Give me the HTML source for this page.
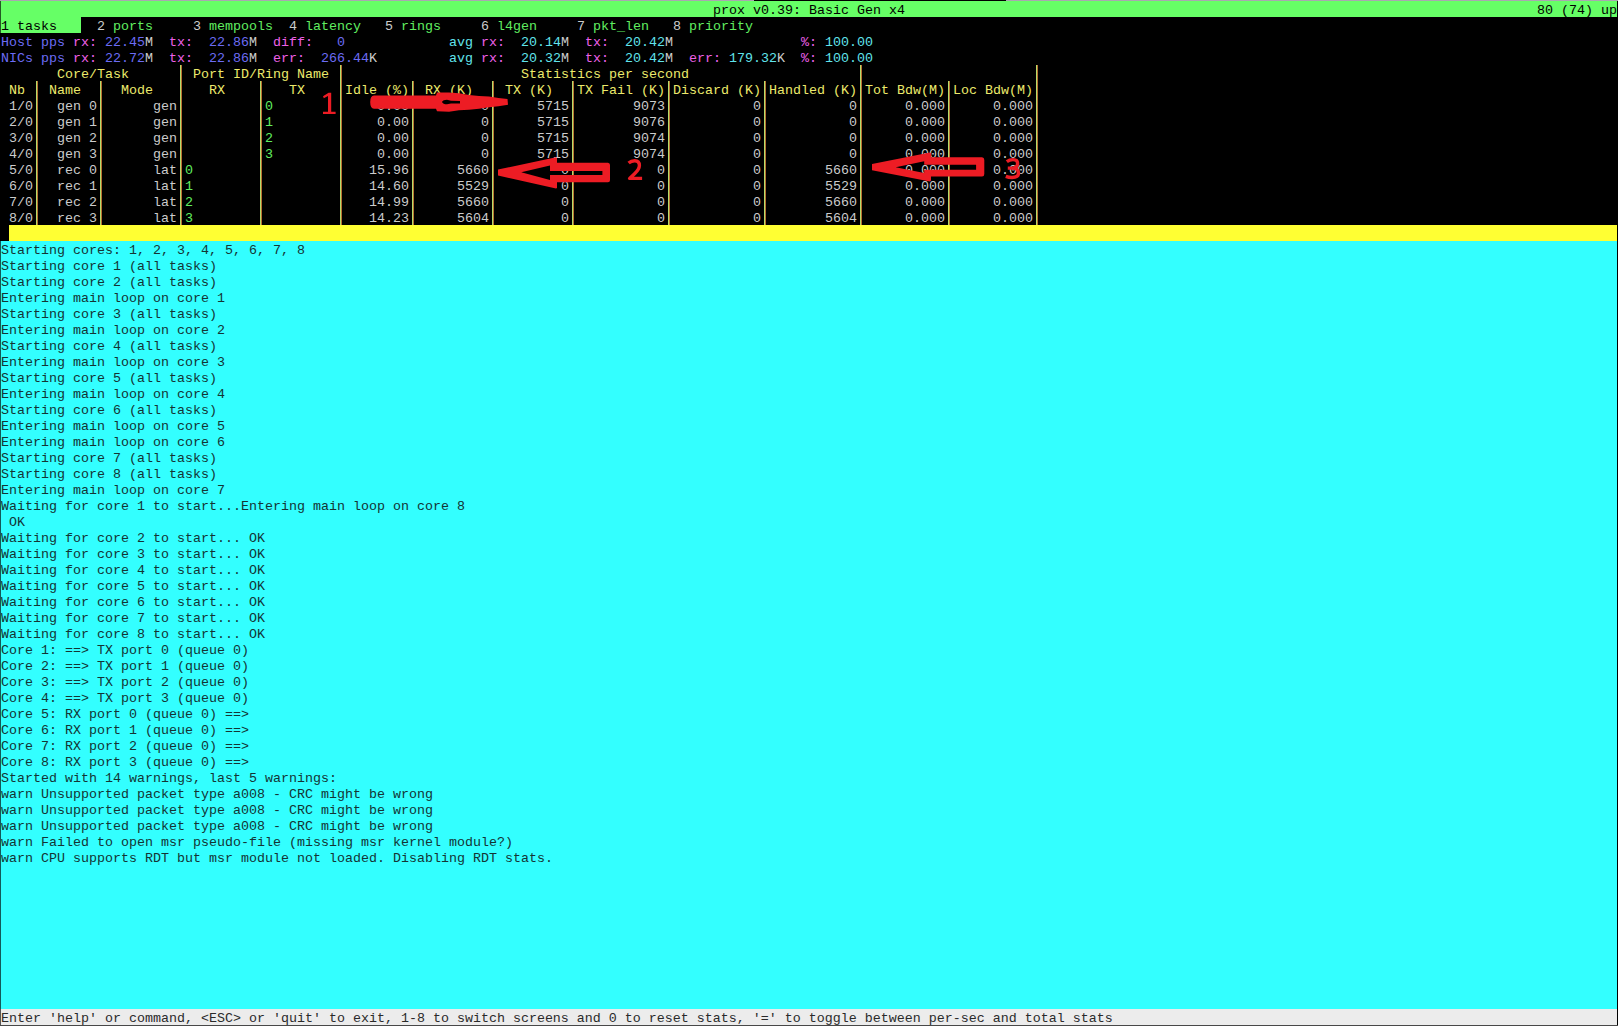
<!DOCTYPE html><html><head><meta charset="utf-8"><style>
html,body{margin:0;padding:0;}
body{width:1618px;height:1026px;position:relative;overflow:hidden;background:#000;font-family:"Liberation Mono",monospace;font-size:13.33px;line-height:16px;}
.b{position:absolute;}
.t{position:absolute;white-space:pre;height:16px;}
.v{position:absolute;width:1px;}
</style></head><body>
<div style="position:absolute;left:0;top:0;width:1618px;height:1026px">
<div class="b" style="left:1px;top:1px;width:1616px;height:16px;background:#66ff66"></div>
<div class="b" style="left:1px;top:17px;width:80px;height:16px;background:#66ff66"></div>
<div class="b" style="left:9px;top:225px;width:1608px;height:16px;background:#ffff33"></div>
<div class="b" style="left:1px;top:241px;width:1616px;height:768px;background:#33ffff"></div>
<div class="b" style="left:1px;top:1009px;width:1616px;height:16px;background:#ececec"></div>
<div class="v" style="left:180px;top:65px;height:160px;background:#b4dc6c"></div>
<div class="v" style="left:181px;top:65px;height:160px;background:#b87030"></div>
<div class="v" style="left:340px;top:65px;height:160px;background:#b4dc6c"></div>
<div class="v" style="left:341px;top:65px;height:160px;background:#b87030"></div>
<div class="v" style="left:860px;top:65px;height:160px;background:#b4dc6c"></div>
<div class="v" style="left:861px;top:65px;height:160px;background:#b87030"></div>
<div class="v" style="left:1036px;top:65px;height:160px;background:#b4dc6c"></div>
<div class="v" style="left:1037px;top:65px;height:160px;background:#b87030"></div>
<div class="v" style="left:36px;top:81px;height:144px;background:#b4dc6c"></div>
<div class="v" style="left:37px;top:81px;height:144px;background:#b87030"></div>
<div class="v" style="left:100px;top:81px;height:144px;background:#b4dc6c"></div>
<div class="v" style="left:101px;top:81px;height:144px;background:#b87030"></div>
<div class="v" style="left:260px;top:81px;height:144px;background:#b4dc6c"></div>
<div class="v" style="left:261px;top:81px;height:144px;background:#b87030"></div>
<div class="v" style="left:412px;top:81px;height:144px;background:#b4dc6c"></div>
<div class="v" style="left:413px;top:81px;height:144px;background:#b87030"></div>
<div class="v" style="left:492px;top:81px;height:144px;background:#b4dc6c"></div>
<div class="v" style="left:493px;top:81px;height:144px;background:#b87030"></div>
<div class="v" style="left:572px;top:81px;height:144px;background:#b4dc6c"></div>
<div class="v" style="left:573px;top:81px;height:144px;background:#b87030"></div>
<div class="v" style="left:668px;top:81px;height:144px;background:#b4dc6c"></div>
<div class="v" style="left:669px;top:81px;height:144px;background:#b87030"></div>
<div class="v" style="left:764px;top:81px;height:144px;background:#b4dc6c"></div>
<div class="v" style="left:765px;top:81px;height:144px;background:#b87030"></div>
<div class="v" style="left:948px;top:81px;height:144px;background:#b4dc6c"></div>
<div class="v" style="left:949px;top:81px;height:144px;background:#b87030"></div>
<div class="t" style="left:713px;top:3px;color:#000">prox v0.39: Basic Gen x4</div>
<div class="t" style="left:1537px;top:3px;color:#000">80 (74) up</div>
<div class="t" style="left:1px;top:19px;color:#000">1 tasks</div>
<div class="t" style="left:97px;top:19px;color:#cccccc">2</div>
<div class="t" style="left:113px;top:19px;color:#60ee60">ports</div>
<div class="t" style="left:193px;top:19px;color:#cccccc">3</div>
<div class="t" style="left:209px;top:19px;color:#60ee60">mempools</div>
<div class="t" style="left:289px;top:19px;color:#cccccc">4</div>
<div class="t" style="left:305px;top:19px;color:#60ee60">latency</div>
<div class="t" style="left:385px;top:19px;color:#cccccc">5</div>
<div class="t" style="left:401px;top:19px;color:#60ee60">rings</div>
<div class="t" style="left:481px;top:19px;color:#cccccc">6</div>
<div class="t" style="left:497px;top:19px;color:#60ee60">l4gen</div>
<div class="t" style="left:577px;top:19px;color:#cccccc">7</div>
<div class="t" style="left:593px;top:19px;color:#60ee60">pkt_len</div>
<div class="t" style="left:673px;top:19px;color:#cccccc">8</div>
<div class="t" style="left:689px;top:19px;color:#60ee60">priority</div>
<div class="t" style="left:1px;top:35px;color:#6c6cf4">Host pps</div>
<div class="t" style="left:73px;top:35px;color:#ee60e8">rx:</div>
<div class="t" style="left:105px;top:35px;color:#6c6cf4">22.45</div>
<div class="t" style="left:145px;top:35px;color:#cccccc">M</div>
<div class="t" style="left:169px;top:35px;color:#ee60e8">tx:</div>
<div class="t" style="left:209px;top:35px;color:#6c6cf4">22.86</div>
<div class="t" style="left:249px;top:35px;color:#cccccc">M</div>
<div class="t" style="left:273px;top:35px;color:#ee60e8">diff:</div>
<div class="t" style="left:337px;top:35px;color:#6c6cf4">0</div>
<div class="t" style="left:449px;top:35px;color:#60e4ec">avg</div>
<div class="t" style="left:481px;top:35px;color:#ee60e8">rx:</div>
<div class="t" style="left:521px;top:35px;color:#60e4ec">20.14</div>
<div class="t" style="left:561px;top:35px;color:#cccccc">M</div>
<div class="t" style="left:585px;top:35px;color:#ee60e8">tx:</div>
<div class="t" style="left:625px;top:35px;color:#60e4ec">20.42</div>
<div class="t" style="left:665px;top:35px;color:#cccccc">M</div>
<div class="t" style="left:801px;top:35px;color:#ee60e8">%:</div>
<div class="t" style="left:825px;top:35px;color:#60e4ec">100.00</div>
<div class="t" style="left:1px;top:51px;color:#6c6cf4">NICs pps</div>
<div class="t" style="left:73px;top:51px;color:#ee60e8">rx:</div>
<div class="t" style="left:105px;top:51px;color:#6c6cf4">22.72</div>
<div class="t" style="left:145px;top:51px;color:#cccccc">M</div>
<div class="t" style="left:169px;top:51px;color:#ee60e8">tx:</div>
<div class="t" style="left:209px;top:51px;color:#6c6cf4">22.86</div>
<div class="t" style="left:249px;top:51px;color:#cccccc">M</div>
<div class="t" style="left:273px;top:51px;color:#ee60e8">err:</div>
<div class="t" style="left:321px;top:51px;color:#6c6cf4">266.44</div>
<div class="t" style="left:369px;top:51px;color:#cccccc">K</div>
<div class="t" style="left:449px;top:51px;color:#60e4ec">avg</div>
<div class="t" style="left:481px;top:51px;color:#ee60e8">rx:</div>
<div class="t" style="left:521px;top:51px;color:#60e4ec">20.32</div>
<div class="t" style="left:561px;top:51px;color:#cccccc">M</div>
<div class="t" style="left:585px;top:51px;color:#ee60e8">tx:</div>
<div class="t" style="left:625px;top:51px;color:#60e4ec">20.42</div>
<div class="t" style="left:665px;top:51px;color:#cccccc">M</div>
<div class="t" style="left:689px;top:51px;color:#ee60e8">err:</div>
<div class="t" style="left:729px;top:51px;color:#60e4ec">179.32</div>
<div class="t" style="left:777px;top:51px;color:#cccccc">K</div>
<div class="t" style="left:801px;top:51px;color:#ee60e8">%:</div>
<div class="t" style="left:825px;top:51px;color:#60e4ec">100.00</div>
<div class="t" style="left:57px;top:67px;color:#ecea6c">Core/Task</div>
<div class="t" style="left:193px;top:67px;color:#ecea6c">Port ID/Ring Name</div>
<div class="t" style="left:521px;top:67px;color:#ecea6c">Statistics per second</div>
<div class="t" style="left:9px;top:83px;color:#ecea6c">Nb</div>
<div class="t" style="left:49px;top:83px;color:#ecea6c">Name</div>
<div class="t" style="left:121px;top:83px;color:#ecea6c">Mode</div>
<div class="t" style="left:209px;top:83px;color:#ecea6c">RX</div>
<div class="t" style="left:289px;top:83px;color:#ecea6c">TX</div>
<div class="t" style="left:345px;top:83px;color:#ecea6c">Idle (%)</div>
<div class="t" style="left:425px;top:83px;color:#ecea6c">RX (K)</div>
<div class="t" style="left:505px;top:83px;color:#ecea6c">TX (K)</div>
<div class="t" style="left:577px;top:83px;color:#ecea6c">TX Fail (K)</div>
<div class="t" style="left:673px;top:83px;color:#ecea6c">Discard (K)</div>
<div class="t" style="left:769px;top:83px;color:#ecea6c">Handled (K)</div>
<div class="t" style="left:865px;top:83px;color:#ecea6c">Tot Bdw(M)</div>
<div class="t" style="left:953px;top:83px;color:#ecea6c">Loc Bdw(M)</div>
<div class="t" style="left:9px;top:99px;color:#cccccc">1/0</div>
<div class="t" style="left:57px;top:99px;color:#cccccc">gen 0</div>
<div class="t" style="left:153px;top:99px;color:#cccccc">gen</div>
<div class="t" style="left:265px;top:99px;color:#60ee60">0</div>
<div class="t" style="left:377px;top:99px;color:#cccccc">0.00</div>
<div class="t" style="left:481px;top:99px;color:#cccccc">0</div>
<div class="t" style="left:537px;top:99px;color:#cccccc">5715</div>
<div class="t" style="left:633px;top:99px;color:#cccccc">9073</div>
<div class="t" style="left:753px;top:99px;color:#cccccc">0</div>
<div class="t" style="left:849px;top:99px;color:#cccccc">0</div>
<div class="t" style="left:905px;top:99px;color:#cccccc">0.000</div>
<div class="t" style="left:993px;top:99px;color:#cccccc">0.000</div>
<div class="t" style="left:9px;top:115px;color:#cccccc">2/0</div>
<div class="t" style="left:57px;top:115px;color:#cccccc">gen 1</div>
<div class="t" style="left:153px;top:115px;color:#cccccc">gen</div>
<div class="t" style="left:265px;top:115px;color:#60ee60">1</div>
<div class="t" style="left:377px;top:115px;color:#cccccc">0.00</div>
<div class="t" style="left:481px;top:115px;color:#cccccc">0</div>
<div class="t" style="left:537px;top:115px;color:#cccccc">5715</div>
<div class="t" style="left:633px;top:115px;color:#cccccc">9076</div>
<div class="t" style="left:753px;top:115px;color:#cccccc">0</div>
<div class="t" style="left:849px;top:115px;color:#cccccc">0</div>
<div class="t" style="left:905px;top:115px;color:#cccccc">0.000</div>
<div class="t" style="left:993px;top:115px;color:#cccccc">0.000</div>
<div class="t" style="left:9px;top:131px;color:#cccccc">3/0</div>
<div class="t" style="left:57px;top:131px;color:#cccccc">gen 2</div>
<div class="t" style="left:153px;top:131px;color:#cccccc">gen</div>
<div class="t" style="left:265px;top:131px;color:#60ee60">2</div>
<div class="t" style="left:377px;top:131px;color:#cccccc">0.00</div>
<div class="t" style="left:481px;top:131px;color:#cccccc">0</div>
<div class="t" style="left:537px;top:131px;color:#cccccc">5715</div>
<div class="t" style="left:633px;top:131px;color:#cccccc">9074</div>
<div class="t" style="left:753px;top:131px;color:#cccccc">0</div>
<div class="t" style="left:849px;top:131px;color:#cccccc">0</div>
<div class="t" style="left:905px;top:131px;color:#cccccc">0.000</div>
<div class="t" style="left:993px;top:131px;color:#cccccc">0.000</div>
<div class="t" style="left:9px;top:147px;color:#cccccc">4/0</div>
<div class="t" style="left:57px;top:147px;color:#cccccc">gen 3</div>
<div class="t" style="left:153px;top:147px;color:#cccccc">gen</div>
<div class="t" style="left:265px;top:147px;color:#60ee60">3</div>
<div class="t" style="left:377px;top:147px;color:#cccccc">0.00</div>
<div class="t" style="left:481px;top:147px;color:#cccccc">0</div>
<div class="t" style="left:537px;top:147px;color:#cccccc">5715</div>
<div class="t" style="left:633px;top:147px;color:#cccccc">9074</div>
<div class="t" style="left:753px;top:147px;color:#cccccc">0</div>
<div class="t" style="left:849px;top:147px;color:#cccccc">0</div>
<div class="t" style="left:905px;top:147px;color:#cccccc">0.000</div>
<div class="t" style="left:993px;top:147px;color:#cccccc">0.000</div>
<div class="t" style="left:9px;top:163px;color:#cccccc">5/0</div>
<div class="t" style="left:57px;top:163px;color:#cccccc">rec 0</div>
<div class="t" style="left:153px;top:163px;color:#cccccc">lat</div>
<div class="t" style="left:185px;top:163px;color:#60ee60">0</div>
<div class="t" style="left:369px;top:163px;color:#cccccc">15.96</div>
<div class="t" style="left:457px;top:163px;color:#cccccc">5660</div>
<div class="t" style="left:561px;top:163px;color:#cccccc">0</div>
<div class="t" style="left:657px;top:163px;color:#cccccc">0</div>
<div class="t" style="left:753px;top:163px;color:#cccccc">0</div>
<div class="t" style="left:825px;top:163px;color:#cccccc">5660</div>
<div class="t" style="left:905px;top:163px;color:#cccccc">0.000</div>
<div class="t" style="left:993px;top:163px;color:#cccccc">0.000</div>
<div class="t" style="left:9px;top:179px;color:#cccccc">6/0</div>
<div class="t" style="left:57px;top:179px;color:#cccccc">rec 1</div>
<div class="t" style="left:153px;top:179px;color:#cccccc">lat</div>
<div class="t" style="left:185px;top:179px;color:#60ee60">1</div>
<div class="t" style="left:369px;top:179px;color:#cccccc">14.60</div>
<div class="t" style="left:457px;top:179px;color:#cccccc">5529</div>
<div class="t" style="left:561px;top:179px;color:#cccccc">0</div>
<div class="t" style="left:657px;top:179px;color:#cccccc">0</div>
<div class="t" style="left:753px;top:179px;color:#cccccc">0</div>
<div class="t" style="left:825px;top:179px;color:#cccccc">5529</div>
<div class="t" style="left:905px;top:179px;color:#cccccc">0.000</div>
<div class="t" style="left:993px;top:179px;color:#cccccc">0.000</div>
<div class="t" style="left:9px;top:195px;color:#cccccc">7/0</div>
<div class="t" style="left:57px;top:195px;color:#cccccc">rec 2</div>
<div class="t" style="left:153px;top:195px;color:#cccccc">lat</div>
<div class="t" style="left:185px;top:195px;color:#60ee60">2</div>
<div class="t" style="left:369px;top:195px;color:#cccccc">14.99</div>
<div class="t" style="left:457px;top:195px;color:#cccccc">5660</div>
<div class="t" style="left:561px;top:195px;color:#cccccc">0</div>
<div class="t" style="left:657px;top:195px;color:#cccccc">0</div>
<div class="t" style="left:753px;top:195px;color:#cccccc">0</div>
<div class="t" style="left:825px;top:195px;color:#cccccc">5660</div>
<div class="t" style="left:905px;top:195px;color:#cccccc">0.000</div>
<div class="t" style="left:993px;top:195px;color:#cccccc">0.000</div>
<div class="t" style="left:9px;top:211px;color:#cccccc">8/0</div>
<div class="t" style="left:57px;top:211px;color:#cccccc">rec 3</div>
<div class="t" style="left:153px;top:211px;color:#cccccc">lat</div>
<div class="t" style="left:185px;top:211px;color:#60ee60">3</div>
<div class="t" style="left:369px;top:211px;color:#cccccc">14.23</div>
<div class="t" style="left:457px;top:211px;color:#cccccc">5604</div>
<div class="t" style="left:561px;top:211px;color:#cccccc">0</div>
<div class="t" style="left:657px;top:211px;color:#cccccc">0</div>
<div class="t" style="left:753px;top:211px;color:#cccccc">0</div>
<div class="t" style="left:825px;top:211px;color:#cccccc">5604</div>
<div class="t" style="left:905px;top:211px;color:#cccccc">0.000</div>
<div class="t" style="left:993px;top:211px;color:#cccccc">0.000</div>
<div class="t" style="left:1px;top:243px;color:#143434">Starting cores: 1, 2, 3, 4, 5, 6, 7, 8</div>
<div class="t" style="left:1px;top:259px;color:#143434">Starting core 1 (all tasks)</div>
<div class="t" style="left:1px;top:275px;color:#143434">Starting core 2 (all tasks)</div>
<div class="t" style="left:1px;top:291px;color:#143434">Entering main loop on core 1</div>
<div class="t" style="left:1px;top:307px;color:#143434">Starting core 3 (all tasks)</div>
<div class="t" style="left:1px;top:323px;color:#143434">Entering main loop on core 2</div>
<div class="t" style="left:1px;top:339px;color:#143434">Starting core 4 (all tasks)</div>
<div class="t" style="left:1px;top:355px;color:#143434">Entering main loop on core 3</div>
<div class="t" style="left:1px;top:371px;color:#143434">Starting core 5 (all tasks)</div>
<div class="t" style="left:1px;top:387px;color:#143434">Entering main loop on core 4</div>
<div class="t" style="left:1px;top:403px;color:#143434">Starting core 6 (all tasks)</div>
<div class="t" style="left:1px;top:419px;color:#143434">Entering main loop on core 5</div>
<div class="t" style="left:1px;top:435px;color:#143434">Entering main loop on core 6</div>
<div class="t" style="left:1px;top:451px;color:#143434">Starting core 7 (all tasks)</div>
<div class="t" style="left:1px;top:467px;color:#143434">Starting core 8 (all tasks)</div>
<div class="t" style="left:1px;top:483px;color:#143434">Entering main loop on core 7</div>
<div class="t" style="left:1px;top:499px;color:#143434">Waiting for core 1 to start...Entering main loop on core 8</div>
<div class="t" style="left:1px;top:515px;color:#143434"> OK</div>
<div class="t" style="left:1px;top:531px;color:#143434">Waiting for core 2 to start... OK</div>
<div class="t" style="left:1px;top:547px;color:#143434">Waiting for core 3 to start... OK</div>
<div class="t" style="left:1px;top:563px;color:#143434">Waiting for core 4 to start... OK</div>
<div class="t" style="left:1px;top:579px;color:#143434">Waiting for core 5 to start... OK</div>
<div class="t" style="left:1px;top:595px;color:#143434">Waiting for core 6 to start... OK</div>
<div class="t" style="left:1px;top:611px;color:#143434">Waiting for core 7 to start... OK</div>
<div class="t" style="left:1px;top:627px;color:#143434">Waiting for core 8 to start... OK</div>
<div class="t" style="left:1px;top:643px;color:#143434">Core 1: ==&gt; TX port 0 (queue 0)</div>
<div class="t" style="left:1px;top:659px;color:#143434">Core 2: ==&gt; TX port 1 (queue 0)</div>
<div class="t" style="left:1px;top:675px;color:#143434">Core 3: ==&gt; TX port 2 (queue 0)</div>
<div class="t" style="left:1px;top:691px;color:#143434">Core 4: ==&gt; TX port 3 (queue 0)</div>
<div class="t" style="left:1px;top:707px;color:#143434">Core 5: RX port 0 (queue 0) ==&gt;</div>
<div class="t" style="left:1px;top:723px;color:#143434">Core 6: RX port 1 (queue 0) ==&gt;</div>
<div class="t" style="left:1px;top:739px;color:#143434">Core 7: RX port 2 (queue 0) ==&gt;</div>
<div class="t" style="left:1px;top:755px;color:#143434">Core 8: RX port 3 (queue 0) ==&gt;</div>
<div class="t" style="left:1px;top:771px;color:#143434">Started with 14 warnings, last 5 warnings:</div>
<div class="t" style="left:1px;top:787px;color:#143434">warn Unsupported packet type a008 - CRC might be wrong</div>
<div class="t" style="left:1px;top:803px;color:#143434">warn Unsupported packet type a008 - CRC might be wrong</div>
<div class="t" style="left:1px;top:819px;color:#143434">warn Unsupported packet type a008 - CRC might be wrong</div>
<div class="t" style="left:1px;top:835px;color:#143434">warn Failed to open msr pseudo-file (missing msr kernel module?)</div>
<div class="t" style="left:1px;top:851px;color:#143434">warn CPU supports RDT but msr module not loaded. Disabling RDT stats.</div>
<div class="t" style="left:1px;top:1011px;color:#2a2a2a">Enter 'help' or command, &lt;ESC&gt; or 'quit' to exit, 1-8 to switch screens and 0 to reset stats, '=' to toggle between per-sec and total stats</div>
</div>
<div class="b" style="left:0;top:1px;width:1px;height:32px;background:#245a24"></div>
<div class="b" style="left:0;top:241px;width:1px;height:768px;background:#135a5a"></div>
<div class="b" style="left:0;top:1009px;width:1px;height:16px;background:#555555"></div>
<div class="b" style="left:0;top:0;width:1618px;height:1px;background:#a9a8b0"></div>
<div class="b" style="left:754px;top:0;width:252px;height:1px;background:#000"></div>
<div class="b" style="left:0;top:1025px;width:1618px;height:1px;background:#484848"></div>
<div class="b" style="left:1617px;top:1px;width:1px;height:1024px;background:#000"></div>
<svg style="position:absolute;left:0;top:0" width="1618" height="1026">
<g fill="#ed1c24" fill-rule="evenodd">
<path d="M374,95.4 L436,95.4 L437,92.4 L449,92.4 L459,93.2 L469,95 L479,95.9 L489,96.4 L498.5,97.9 L507.5,99 L508,104.8 L498.5,106.3 L489,107.3 L479,108.7 L469,109.7 L459,110.2 L449,111.7 L437,111.3 L436,108.7 L374,108.7 Q370.2,108.6 370.2,102 Q370.2,95.5 374,95.4 Z M442,102 Q443,99.8 447,99.8 L451,100.8 L460,101 L460,103.4 L451,103.4 L447,104.3 Q443,104.3 442,102 Z"/>
<path d="M498,169.5 L556,157.2 L557,158 L557,162.8 L608,162.8 Q610,163 610,165 L610,180.3 Q610,182.3 608,182.3 L557,182.3 L557,188 L556,188.4 L498,175.6 Z M521.2,172.3 L550,165.6 L550,171.1 L602.4,171.1 L602.4,175 L550,175 L550,180 Z"/>
<path d="M872,164 L930,152.4 L931,153.5 L931,157.3 L982,157.3 Q984.3,157.5 984.3,160 L984.3,174 Q984.3,176.5 982,176.5 L931,176.5 L931,180.5 L930,181.4 L872,170.3 Z M895.7,167.2 L924.2,161.3 L924.2,164.7 L976.1,164.7 L976.1,169.7 L924.2,169.7 L924.2,173.1 Z"/>
<path d="M323,96.2 L328.6,92.8 L331.2,92.8 L331.2,111.8 L335.6,111.8 L335.6,114 L323,114 L323,111.8 L328,111.8 L328,96 L323.8,98.2 Z"/>
</g>
<g fill="none" stroke="#ed1c24" stroke-width="3.4" stroke-linejoin="round">
<path d="M628.6,163 C630.6,161.2 632.8,160.7 634.8,160.7 C638,160.7 639.4,162.8 639.4,165.6 C639.4,168.6 637.8,170.8 634.6,173.8 L629.6,178.4 L642.1,178.4"/>
<path d="M1006.8,161.6 C1009,160 1011,159.6 1013,159.6 C1016.3,159.6 1017.6,161.6 1017.6,163.6 C1017.6,166.4 1015.4,168.1 1012,168.1 L1007.8,168.1 M1012,168.1 C1016.4,168.1 1018.5,170.4 1018.5,173 C1018.5,176 1016,177.5 1012,177.5 C1009.6,177.5 1007.6,177.1 1005.8,176.4"/>
</g>
</svg>

</body></html>
